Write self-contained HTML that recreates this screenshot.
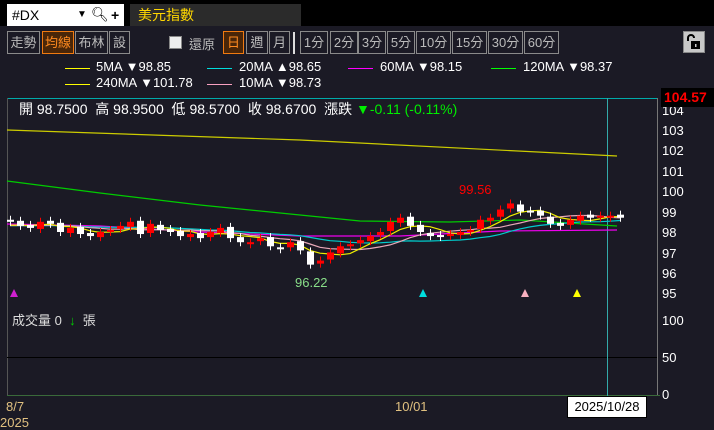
<!DOCTYPE html>
<html><head><meta charset="utf-8"><style>
*{margin:0;padding:0;box-sizing:border-box}
body{width:714px;height:426px;background:#1b1a25;overflow:hidden;position:relative;font-family:"Liberation Sans","Noto Sans CJK TC",sans-serif;color:#fff}
.abs{position:absolute}
.btn{position:absolute;top:31px;height:23px;border:1px solid #8a8a8a;color:#bbb;font-size:13px;line-height:21px;text-align:center}
.on{border-color:#f07a10;background:#4a2608;color:#ff8a20}
.lg{position:absolute;font-size:13px;color:#fff;white-space:nowrap}
.ln{position:absolute;height:1px;width:25px}
.ax{position:absolute;left:662px;font-size:13px;color:#fff}
</style></head><body>
<div class="abs" style="left:0;top:0;width:714px;height:26px;background:#000"></div>
<div class="abs" style="left:7px;top:4px;width:117px;height:22px;background:#fff;color:#000;font-size:14px;line-height:22px;padding-left:5px">#DX<span style="position:absolute;left:70px;font-size:10px">▼</span><span style="position:absolute;left:84px;top:-1px">🔍︎</span><span style="position:absolute;left:104px;font-weight:bold">+</span></div>
<div class="abs" style="left:130px;top:4px;width:171px;height:22px;background:#2b2b2b;color:#ffd700;font-size:14px;line-height:22px;padding-left:8px">美元指數</div>

<div class="btn" style="left:7px;width:33px">走勢</div>
<div class="btn on" style="left:42px;width:32px">均線</div>
<div class="btn" style="left:75px;width:33px">布林</div>
<div class="btn" style="left:109px;width:21px">設</div>
<div class="abs" style="left:169px;top:36px;width:13px;height:13px;background:#eee;border:1px solid #888"></div>
<div class="abs" style="left:189px;top:34px;font-size:13px;color:#bbb">還原</div>
<div class="btn on" style="left:223px;width:21px">日</div>
<div class="btn" style="left:246px;width:22px">週</div>
<div class="btn" style="left:269px;width:21px">月</div>
<div class="abs" style="left:293px;top:32px;width:2px;height:22px;background:#ddd"></div>
<div class="btn" style="left:300px;width:28px">1分</div>
<div class="btn" style="left:330px;width:28px">2分</div>
<div class="btn" style="left:358px;width:28px">3分</div>
<div class="btn" style="left:387px;width:28px">5分</div>
<div class="btn" style="left:416px;width:35px">10分</div>
<div class="btn" style="left:452px;width:35px">15分</div>
<div class="btn" style="left:488px;width:35px">30分</div>
<div class="btn" style="left:524px;width:35px">60分</div>
<div class="abs" style="left:683px;top:31px;width:22px;height:22px;background:#c8c8c8;border:1px solid #888"><svg width="20" height="20" viewBox="0 0 20 20"><path d="M4 9V6a3 3 0 0 1 6 0" stroke="#000" stroke-width="2" fill="none"/><rect x="7" y="9" width="9" height="8" fill="#000"/><rect x="11" y="12" width="1.5" height="3" fill="#c8c8c8"/></svg></div>

<div class="ln" style="left:65px;top:68px;background:#ff0"></div><div class="lg" style="left:96px;top:59px">5MA ▼98.85</div>
<div class="ln" style="left:207px;top:68px;background:#0dd"></div><div class="lg" style="left:239px;top:59px">20MA ▲98.65</div>
<div class="ln" style="left:348px;top:68px;background:#f0f"></div><div class="lg" style="left:380px;top:59px">60MA ▼98.15</div>
<div class="ln" style="left:491px;top:68px;background:#0f0"></div><div class="lg" style="left:523px;top:59px">120MA ▼98.37</div>
<div class="ln" style="left:65px;top:84px;background:#ff0"></div><div class="lg" style="left:96px;top:75px">240MA ▼101.78</div>
<div class="ln" style="left:207px;top:84px;background:#f8a0c0"></div><div class="lg" style="left:239px;top:75px">10MA ▼98.73</div>

<svg class="abs" style="left:0;top:0" width="714" height="426" id="ch">
<line x1="7" y1="98.5" x2="657" y2="98.5" stroke="#0aa" />
<line x1="657.5" y1="98" x2="657.5" y2="396" stroke="#777"/>
<line x1="7.5" y1="98" x2="7.5" y2="396" stroke="#555"/>
<line x1="7" y1="357.5" x2="657" y2="357.5" stroke="#000"/>
<line x1="7" y1="395.5" x2="660" y2="395.5" stroke="#3a6a3a"/>
<line x1="607.5" y1="98" x2="607.5" y2="396" stroke="#3aa"/>
<polygon points="10,297 18,297 14,289" fill="#d020d0"/>
<polygon points="419,297 427,297 423,289" fill="#0dd"/>
<polygon points="521,297 529,297 525,289" fill="#f8b0c0"/>
<polygon points="573,297 581,297 577,289" fill="#ff0"/>
<g id="g"></g>
</svg>

<div class="abs" style="left:19px;top:99px;font-size:14px;white-space:nowrap">開 98.7500 &nbsp;高 98.9500 &nbsp;低 98.5700 &nbsp;收 98.6700 &nbsp;漲跌 <span style="color:#0e0">▼-0.11 (-0.11%)</span></div>
<div class="ax" style="top:123px">103</div>
<div class="ax" style="top:103px">104</div>
<div class="ax" style="top:143px">102</div>
<div class="ax" style="top:164px">101</div>
<div class="ax" style="top:184px">100</div>
<div class="ax" style="top:205px">99</div>
<div class="ax" style="top:225px">98</div>
<div class="ax" style="top:246px">97</div>
<div class="ax" style="top:266px">96</div>
<div class="ax" style="top:286px">95</div>
<div class="ax" style="top:313px">100</div>
<div class="ax" style="top:350px">50</div>
<div class="ax" style="top:387px">0</div>
<div class="abs" style="left:661px;top:88px;width:53px;height:19px;background:#000;color:#f00;font-weight:bold;font-size:14px;line-height:19px;padding-left:3px">104.57</div>
<div class="abs" style="left:459px;top:182px;font-size:13px;color:#f00">99.56</div>
<div class="abs" style="left:295px;top:275px;font-size:13px;color:#8d8">96.22</div>
<div class="abs" style="left:12px;top:310px;font-size:13px;color:#ddd">成交量 0 &nbsp;<span style="color:#0c0">↓</span> &nbsp;張</div>
<div class="abs" style="left:6px;top:399px;font-size:13px;color:#e0c080">8/7</div>
<div class="abs" style="left:0px;top:415px;font-size:13px;color:#e0c080">2025</div>
<div class="abs" style="left:395px;top:399px;font-size:13px;color:#e0c080">10/01</div>
<div class="abs" style="left:567px;top:396px;width:80px;height:22px;background:#fff;border:1px solid #000;color:#000;font-size:13px;line-height:20px;text-align:center">2025/10/28</div>
<script>
var c=[98.5,98.3,98.2,98.5,98.4,98.0,98.2,97.9,97.8,98.0,98.1,98.3,98.5,97.9,98.4,98.1,98.0,97.8,97.9,97.7,98.0,98.2,97.7,97.5,97.5,97.7,97.3,97.2,97.5,97.1,96.4,96.6,97.0,97.3,97.4,97.6,97.8,98.0,98.5,98.7,98.3,98.0,97.8,97.8,97.9,98.0,98.1,98.6,98.7,99.1,99.4,99.0,99.0,98.8,98.4,98.3,98.6,98.8,98.7,98.8,98.8,98.7];
function Y(p){return 232-(p-98)*20.4}
var s='',g=document.getElementById('g');
function X(i){return 10+i*10}
function ma(n,col){var pts=[];for(var i=0;i<c.length;i++){var a=0,k=0;for(var j=Math.max(0,i-n+1);j<=i;j++){a+=c[j];k++}var v=(a+(n-k)*98.3)/n;pts.push(X(i)+','+Y(v).toFixed(1))}s+='<polyline points="'+pts.join(' ')+'" fill="none" stroke="'+col+'" stroke-width="1.2"/>'}
s+='<polyline points="7,130 300,140 617,156" fill="none" stroke="#cc0" stroke-width="1.2"/>';
s+='<polyline points="7,181 100,193 200,205 300,215 360,221 450,222 520,220 617,226" fill="none" stroke="#0c0" stroke-width="1.2"/>';
s+='<polyline points="7,224 100,226 200,232 300,236 400,236 500,231 617,230" fill="none" stroke="#e0e" stroke-width="1.2"/>';
ma(20,'#0cc');ma(10,'#e8a8b8');ma(5,'#ee0');
for(var i=0;i<c.length;i++){var o=i?c[i-1]+(i%3?0.05:-0.05):98.6,cl=c[i];var up=cl>o;var col=up?'#f00':'#fff';var t=Y(Math.max(o,cl)),b=Y(Math.min(o,cl));var h=Math.max(2,b-t);var x=X(i);s+='<line x1="'+(x+0.5)+'" x2="'+(x+0.5)+'" y1="'+(t-4)+'" y2="'+(t+h+4)+'" stroke="'+col+'"/><rect x="'+(x-3)+'" y="'+t+'" width="7" height="'+h+'" fill="'+col+'"/>';}
g.innerHTML=s;
</script>
</body></html>
